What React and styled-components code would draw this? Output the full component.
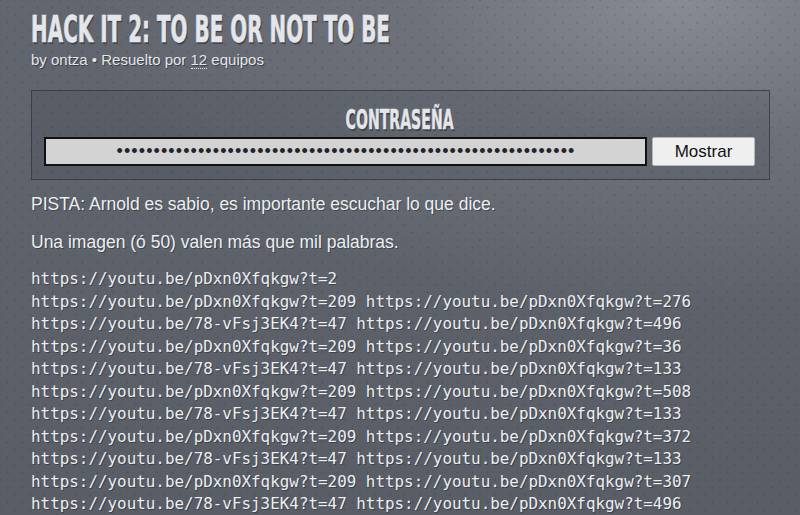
import React, { useLayoutEffect, useRef, useState } from "react";
import styled, { createGlobalStyle } from "styled-components";

const Global = createGlobalStyle`
  html, body { margin: 0; padding: 0; }
  body {
    min-height: 515px;
    background-color: #5b6069;
    background-image:
      radial-gradient(circle at 50% 50%, rgba(40,44,52,0.18) 0.9px, transparent 1.4px),
      radial-gradient(circle at 50% 50%, rgba(40,44,52,0.18) 0.9px, transparent 1.4px),
      radial-gradient(ellipse 75% 60% at 85% 0%, #878c94 0%, #6c717a 45%, rgba(91,96,105,0) 100%),
      linear-gradient(180deg, #62676f 0%, #585d66 100%);
    background-size: 15px 15px, 15px 15px, 100% 100%, 100% 100%;
    background-position: 0 0, 7.5px 7.5px, 0 0, 0 0;
    font-family: "Liberation Sans", Arial, sans-serif;
    color: #e9eaec;
    overflow: hidden;
  }
`;

const Page = styled.div`
  padding: 10px 30px 0 31px;
`;

const TitleBlock = styled.h1`
  margin: 0;
  height: 38px;
  white-space: nowrap;
`;

const Squeezed = styled.span`
  display: inline-block;
  transform-origin: ${(p) => (p.$center ? "50% 50%" : "0 50%")};
  font-family: "DejaVu Sans", sans-serif;
  font-weight: bold;
  font-size: ${(p) => p.$size}px;
  line-height: 1;
  color: #e4e6ea;
  -webkit-text-stroke: ${(p) => p.$stroke}px #e4e6ea;
  text-transform: uppercase;
  text-shadow: 1px 1px 0 #3b3e45, 2px 2px 0 rgba(40,42,48,0.6);
`;

function FitText({ width, size, center, stroke = 0.7, children }) {
  const ref = useRef(null);
  const [scale, setScale] = useState(1);
  useLayoutEffect(() => {
    if (ref.current) {
      const w = ref.current.offsetWidth;
      if (w) setScale(width / w);
    }
  }, [width]);
  return (
    <Squeezed
      ref={ref}
      $size={size}
      $center={center}
      $stroke={stroke}
      style={{ transform: `scaleX(${scale})` }}
    >
      {children}
    </Squeezed>
  );
}

const Byline = styled.div`
  margin-top: 3px;
  font-size: 15px;
  line-height: 18px;
  color: #e4e6e9;
  text-shadow: 1px 1px 0 rgba(40,42,48,0.7);
`;

const Abbr = styled.span`
  border-bottom: 1px dotted #e4e6e9;
`;

const Box = styled.section`
  margin-top: 21px;
  border: 1px solid rgba(50,54,62,0.75);
  background: rgba(40,44,52,0.12);
  padding: 16px 14px 13px 12px;
`;

const BoxHeading = styled.h2`
  margin: 0 0 4px;
  height: 26px;
  text-align: center;
  white-space: nowrap;
`;

const Row = styled.div`
  display: flex;
  align-items: center;
  gap: 5px;
`;

const PassInput = styled.input`
  flex: 1;
  height: 29px;
  box-sizing: border-box;
  border: 1px solid #111;
  outline: 1px solid #111;
  outline-offset: -2px;
  background: #d3d3d3;
  text-align: center;
  font-family: "Liberation Sans", Arial, sans-serif;
  font-size: 18px;
  letter-spacing: 1.1px;
  color: #22252c;
  padding: 0 0 0 1px;
  margin: 0;
`;

const ShowButton = styled.button`
  width: 103px;
  height: 29px;
  box-sizing: border-box;
  border: 1px solid #b4b6ba;
  border-radius: 2px;
  background: #efefef;
  font-family: "Liberation Sans", Arial, sans-serif;
  font-size: 17px;
  color: #111;
  padding: 0;
  margin: 0;
`;

const Para = styled.p`
  margin: 13px 0 0;
  font-size: 17.5px;
  line-height: 22px;
  color: #eceef0;
  text-shadow: 1px 1px 0 rgba(40,42,48,0.55);
  & + & {
    margin-top: 16px;
  }
`;

const Code = styled.div`
  margin-top: 15px;
  font-family: "DejaVu Sans Mono", "Liberation Mono", monospace;
  font-size: 15.9px;
  line-height: 22.5px;
  color: #eceef0;
  text-shadow: 1px 1px 0 rgba(40,42,48,0.55);
  white-space: pre;
`;

const lines = [
  "https://youtu.be/pDxn0Xfqkgw?t=2",
  "https://youtu.be/pDxn0Xfqkgw?t=209 https://youtu.be/pDxn0Xfqkgw?t=276",
  "https://youtu.be/78-vFsj3EK4?t=47 https://youtu.be/pDxn0Xfqkgw?t=496",
  "https://youtu.be/pDxn0Xfqkgw?t=209 https://youtu.be/pDxn0Xfqkgw?t=36",
  "https://youtu.be/78-vFsj3EK4?t=47 https://youtu.be/pDxn0Xfqkgw?t=133",
  "https://youtu.be/pDxn0Xfqkgw?t=209 https://youtu.be/pDxn0Xfqkgw?t=508",
  "https://youtu.be/78-vFsj3EK4?t=47 https://youtu.be/pDxn0Xfqkgw?t=133",
  "https://youtu.be/pDxn0Xfqkgw?t=209 https://youtu.be/pDxn0Xfqkgw?t=372",
  "https://youtu.be/78-vFsj3EK4?t=47 https://youtu.be/pDxn0Xfqkgw?t=133",
  "https://youtu.be/pDxn0Xfqkgw?t=209 https://youtu.be/pDxn0Xfqkgw?t=307",
  "https://youtu.be/78-vFsj3EK4?t=47 https://youtu.be/pDxn0Xfqkgw?t=496",
];

export default function App() {
  return (
    <>
      <Global />
      <Page>
        <TitleBlock>
          <FitText width={359} size={38}>Hack it 2: To be or not to be</FitText>
        </TitleBlock>
        <Byline>
          by ontza • Resuelto por <Abbr>12</Abbr> equipos
        </Byline>
        <Box>
          <BoxHeading>
            <FitText width={108} size={26} center stroke={0.5}>Contraseña</FitText>
          </BoxHeading>
          <Row>
            <PassInput type="password" readOnly value={"x".repeat(62)} />
            <ShowButton type="button">Mostrar</ShowButton>
          </Row>
        </Box>
        <Para>PISTA: Arnold es sabio, es importante escuchar lo que dice.</Para>
        <Para>Una imagen (ó 50) valen más que mil palabras.</Para>
        <Code>
          {lines.map((l, i) => (
            <div key={i}>{l}</div>
          ))}
        </Code>
      </Page>
    </>
  );
}
